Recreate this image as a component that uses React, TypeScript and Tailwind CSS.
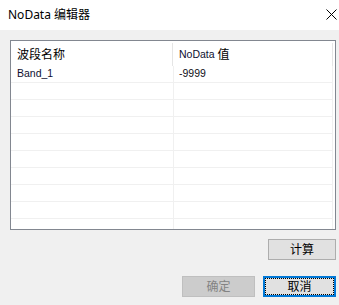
import React from "react";

const cjk = '"Noto Sans", "Noto Sans CJK SC", sans-serif';
const listFont = '"Liberation Sans", "Noto Sans CJK SC", sans-serif';

const rows = [
  { name: "Band_1", value: "-9999" },
  ...Array.from({ length: 9 }, () => ({ name: "", value: "" })),
];

export default function App() {
  return (
    <div className="w-[339px] h-[305px] bg-[#f0f0f0] flex flex-col overflow-hidden" style={{ fontFamily: cjk }}>
      {/* title bar */}
      <div className="h-[30px] bg-white flex items-center justify-between pl-[8px] pr-[2px] shrink-0">
        <span className="text-[12px] text-black leading-none">NoData 编辑器</span>
        <svg width="11" height="11" viewBox="0 0 11 11" className="mb-[1px]">
          <path d="M0.5 0.5 L10.5 10.5 M10.5 0.5 L0.5 10.5" stroke="#000" strokeWidth="1" fill="none" />
        </svg>
      </div>

      <div className="flex flex-col pl-[10px] pr-[3px] pt-[10px]">
        {/* list view */}
        <div className="h-[190px] border border-[#828790] bg-white overflow-hidden flex flex-col pr-[2px]" style={{ fontFamily: listFont }}>
          <div className="h-[25px] flex shrink-0">
            <div className="w-[162px] border-r border-[#e5e5e5] mt-[2px] pl-[6px] flex items-center pt-[1px] text-[12px] text-black" style={{ fontFamily: cjk }}>
              波段名称
            </div>
            <div className="flex-1 border-r border-[#e5e5e5] mt-[2px] pl-[6px] flex items-center pt-[1px] text-[#0e1030]">
              <span className="text-[10.5px]">NoData</span>
              <span className="text-[12px] text-black ml-[3px]" style={{ fontFamily: cjk }}>值</span>
            </div>
          </div>
          {rows.map((r, i) => (
            <div key={i} className="h-[17px] flex shrink-0 border-b border-[#f0f0f0]">
              <div className="w-[163px] border-r border-[#f0f0f0] pl-[6px] flex items-center text-[10.5px] text-[#0e1030]">
                {r.name}
              </div>
              <div className="flex-1 border-r border-[#f0f0f0] pl-[5px] flex items-center text-[10.5px] text-[#101018]">
                {r.value}
              </div>
            </div>
          ))}
        </div>

        {/* calc button */}
        <div className="flex justify-end mt-[9px]">
          <button className="w-[68px] h-[21px] border border-[#adadad] bg-[#e1e1e1] text-[12px] text-black flex items-center justify-center">
            计算
          </button>
        </div>

        {/* dialog buttons */}
        <div className="flex justify-end gap-[8px] mt-[16px]">
          <button disabled className="w-[73px] h-[21px] border border-[#bfbfbf] bg-[#cccccc] text-[12px] text-[#838383] flex items-center justify-center">
            确定
          </button>
          <button className="w-[73px] h-[21px] border-2 border-[#0078d7] bg-[#e1e1e1] text-[12px] text-black flex">
            <span className="flex-1 border border-dotted border-black flex items-center justify-center">
              取消
            </span>
          </button>
        </div>
      </div>
    </div>
  );
}
